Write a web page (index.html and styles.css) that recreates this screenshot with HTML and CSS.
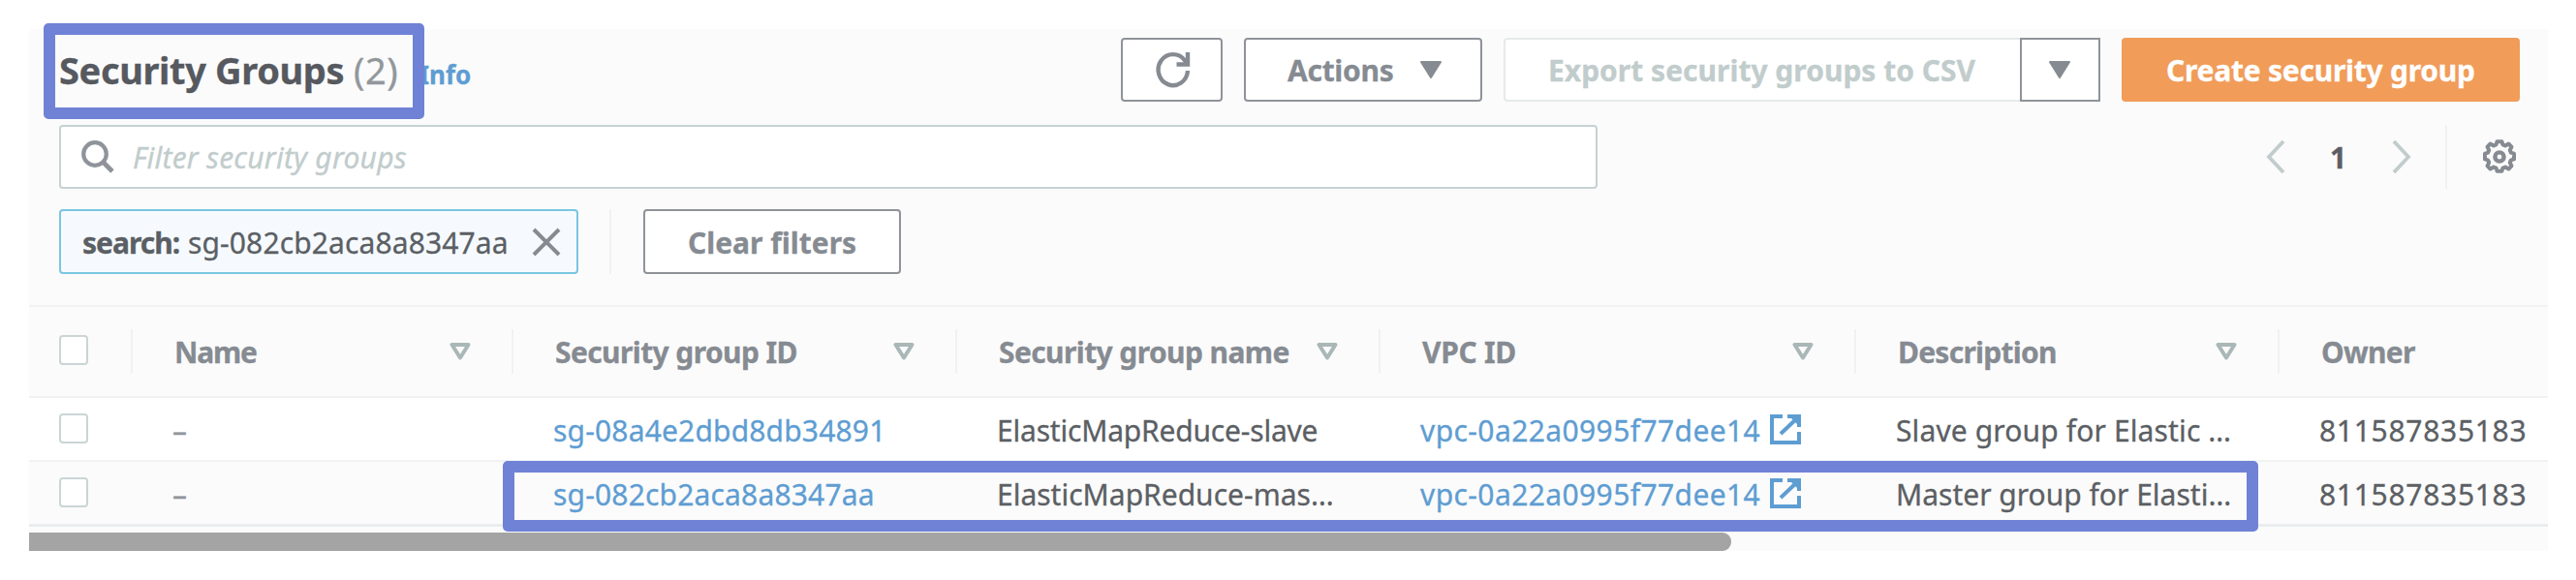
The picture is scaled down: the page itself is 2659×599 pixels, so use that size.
FILE: index.html
```html
<!DOCTYPE html>
<html lang="en">
<head>
<meta charset="utf-8">
<title>Security Groups</title>
<link rel="stylesheet" href="styles.css">
</head>
<body>
<svg class="defs" width="0" height="0">
  <symbol id="ext" viewBox="0 0 32 31"><path d="M13 2H2v27h28V18M18 2h12v11M29 3 11 20" fill="none" stroke="currentColor" stroke-width="4"/><path d="M19 1h12v12z" fill="currentColor"/></symbol>
  <symbol id="sort" viewBox="0 0 22 18"><path d="M2.500 2h17L11 15.500z" fill="none" stroke="currentColor" stroke-width="4" stroke-linejoin="round"/></symbol>
  <symbol id="down" viewBox="0 0 22 18"><path d="M1 1h20L11 17z" fill="currentColor" stroke="currentColor" stroke-width="2" stroke-linejoin="round"/></symbol>
</svg>
<main class="panel">
  <header class="top">
    <h1 class="title">Security Groups</h1><span class="count">(2)</span><a class="info">Info</a>
    <div class="actions">
      <button class="btn refresh"><svg width="36" height="38" viewBox="0 0 36 38"><path d="M33 20A15.200 16 0 1 1 30 9.500L33 13" fill="none" stroke="currentColor" stroke-width="4.400"/><path d="M33 1v12.500H21.500" fill="none" stroke="currentColor" stroke-width="4.400"/></svg></button>
      <button class="btn menu"><span class="t-actions">Actions</span><svg width="22" height="18"><use href="#down"/></svg></button>
      <div class="split">
        <button class="btn export"><span class="t-export">Export security groups to CSV</span></button>
        <button class="btn drop"><svg width="22" height="18"><use href="#down"/></svg></button>
      </div>
      <button class="btn create"><span class="t-create">Create security group</span></button>
    </div>
  </header>
  <section class="search-row">
    <div class="search"><svg width="34" height="34" viewBox="0 0 34 34"><circle cx="14" cy="14" r="11.800" fill="none" stroke="currentColor" stroke-width="4.200"/><path d="m22.500 22.500 9.500 9.500" stroke="currentColor" stroke-width="4.800"/></svg><span class="placeholder">Filter security groups</span></div>
    <nav class="pager">
      <svg class="prev" width="20" height="34" viewBox="0 0 20 34"><path d="M18 1 3 17l15 16" fill="none" stroke="currentColor" stroke-width="3.800"/></svg>
      <span class="page">1</span>
      <svg class="next" width="20" height="34" viewBox="0 0 20 34"><path d="m2 1 15 16L2 33" fill="none" stroke="currentColor" stroke-width="3.800"/></svg>
      <div class="settings"><svg width="36" height="36" viewBox="0 0 36 36"><g fill="none" stroke="currentColor" stroke-linejoin="round"><path stroke-width="4" d="m14.600 5.300.9-3h5l.9 3 2.600 1.100 3.400-1.900 3.100 3.100-1.700 3.500 1.100 2.600 3.100.9v5.800l-3.100.9-1.100 2.600 1.700 3.500-3.100 3.100-3.400-1.900-2.600 1.100-.9 3h-5l-.9-3-2.600-1.100-3.400 1.900-3.100-3.100 1.700-3.500-1.100-2.600-3.100-.9v-5.800l3.100-.9 1.100-2.600-1.700-3.500 3.100-3.100L12 6.400z"/><circle stroke-width="4.400" cx="18" cy="18" r="4.600"/></g></svg></div>
    </nav>
  </section>
  <section class="filters">
    <div class="token"><b class="t-key">search:</b><span class="t-value">sg-082cb2aca8a8347aa</span><svg width="30" height="30" viewBox="0 0 30 30"><path d="m2 2 26 26M28 2 2 28" stroke="currentColor" stroke-width="4"/></svg></div>
    <div class="clear-wrap"><button class="btn clear"><span class="t-clear">Clear filters</span></button></div>
  </section>
  <section class="table">
    <div class="row head">
      <div class="check"><i class="box"></i></div>
      <div class="cell"><span class="h-name">Name</span><svg width="22" height="18"><use href="#sort"/></svg></div>
      <div class="cell"><span class="h-id">Security group ID</span><svg width="22" height="18"><use href="#sort"/></svg></div>
      <div class="cell"><span class="h-gname">Security group name</span><svg width="22" height="18"><use href="#sort"/></svg></div>
      <div class="cell"><span class="h-vpc">VPC ID</span><svg width="22" height="18"><use href="#sort"/></svg></div>
      <div class="cell"><span class="h-desc">Description</span><svg width="22" height="18"><use href="#sort"/></svg></div>
      <div class="cell"><span class="h-owner">Owner</span></div>
    </div>
    <div class="row">
      <div class="check"><i class="box"></i></div>
      <div class="cell muted"><span>–</span></div>
      <div class="cell"><a class="link c-id">sg-08a4e2dbd8db34891</a></div>
      <div class="cell"><span class="c-n1">ElasticMapReduce-slave</span></div>
      <div class="cell"><a class="link c-vpc">vpc-0a22a0995f77dee14</a><svg class="ext" width="32" height="31"><use href="#ext"/></svg></div>
      <div class="cell"><span class="c-d1">Slave group for Elastic …</span></div>
      <div class="cell"><span class="c-owner">811587835183</span></div>
    </div>
    <div class="row alt">
      <div class="check"><i class="box"></i></div>
      <div class="cell muted"><span>–</span></div>
      <div class="cell"><a class="link c-id">sg-082cb2aca8a8347aa</a></div>
      <div class="cell"><span class="c-n2">ElasticMapReduce-mas…</span></div>
      <div class="cell"><a class="link c-vpc">vpc-0a22a0995f77dee14</a><svg class="ext" width="32" height="31"><use href="#ext"/></svg></div>
      <div class="cell"><span class="c-d2">Master group for Elasti…</span></div>
      <div class="cell"><span class="c-owner">811587835183</span></div>
    </div>
  </section>
  <div class="scrollbar"><div class="thumb"></div></div>
</main>
<div class="mark mark-title"></div>
<div class="mark mark-row"></div>
</body>
</html>
```
FILE: styles.css
```css
* { box-sizing: border-box; }
body { margin: 0; padding: 30px 29px 30px 30px; height: 599px; overflow: hidden; background: #fff; position: relative; font: 30px/40px "Noto Sans", sans-serif; color: #5b5f64; }
.defs { position: absolute; }
svg { display: block; flex: none; }
.panel { height: 539px; background: #fbfbfb; overflow: hidden; }
span, a, b, h1 { white-space: nowrap; -webkit-text-stroke: 0.3px currentColor; }

.top { display: flex; align-items: center; height: 66px; margin-top: 9px; padding: 0 29px 0 31px; }
.title { margin: 0; width: 304px; font-size: 38px; line-height: 52px; letter-spacing: -0.36px; color: #56595f; }
.count { width: 68px; font-size: 38px; letter-spacing: 0.6px; color: #92979c; }
.info { margin-top: 9px; font-size: 26px; font-weight: 700; color: #5e9dd2; }
.actions { display: flex; gap: 22px; margin-left: auto; }
.btn { display: flex; align-items: center; height: 66px; padding: 0; border: 2px solid #8f9399; border-radius: 4px; background: #fff; font: 700 30px/40px "Noto Sans", sans-serif; text-align: left; color: #868b92; }
.btn span { padding-top: 2px; }
.refresh { width: 105px; padding-left: 34px; }
.menu { width: 246px; padding-left: 43px; }
.menu span { width: 137px; letter-spacing: -0.3px; }
.split { display: flex; }
.export { width: 533px; padding-left: 44px; border-color: #e6eaea; border-right: 0; border-radius: 4px 0 0 4px; color: #c1cccc; }
.drop { width: 83px; padding-left: 28px; border-radius: 0; }
.create { width: 411px; padding-left: 46px; border: 0; background: #f19c59; color: #fff; }
.t-create { letter-spacing: -0.25px; }

.search-row { display: flex; align-items: center; height: 66px; margin-top: 24px; padding: 0 33px 0 31px; }
.search { display: flex; align-items: center; gap: 19px; width: 1588px; height: 66px; padding-left: 21px; border: 2px solid #c7d2d2; border-radius: 4px; background: #fff; color: #8f949b; }
.placeholder { padding-top: 2px; font-style: italic; letter-spacing: 0.22px; color: #c1cccc; }
.pager { display: flex; align-items: center; margin-left: auto; color: #c1cccc; }
.page { width: 64px; margin-left: 46px; padding-top: 2px; font-weight: 700; color: #5b5f64; }
.settings { display: flex; align-items: center; width: 73px; height: 66px; margin-left: 35px; padding-left: 36px; border-left: 2px solid #f0f2f2; color: #868b92; }

.filters { display: flex; height: 67px; margin-top: 21px; padding-left: 31px; }
.token { display: flex; align-items: center; width: 536px; padding-left: 22px; border: 2px solid #7ac6e0; border-radius: 4px; background: #f6faff; color: #5b5f64; }
.t-key { width: 109px; padding-top: 2px; letter-spacing: -1px; }
.t-value { width: 355px; padding-top: 2px; letter-spacing: 0.12px; }
.token svg { color: #868b92; }
.clear-wrap { margin-left: 32px; padding-left: 33px; border-left: 2px solid #f0f2f2; }
.clear { width: 266px; height: 67px; padding-left: 44px; }

.table { margin-top: 32px; }
.row { display: grid; grid-template-columns: 105px 393px 458px 437px 491px 437px 279px; height: 66px; padding-top: 1px; align-items: center; border-bottom: 2px solid #f1f3f3; background: #fff; }
.head { height: 96px; padding-top: 0; border-top: 2px solid #f1f3f3; background: #fbfbfb; font-weight: 700; color: #868b92; }
.alt { height: 67px; border-bottom: 3px solid #e9eded; background: #fbfbfb; }
.check { padding-left: 31px; }
.box { display: block; width: 30px; height: 31px; margin-top: -3px; border: 2px solid #cbd5d5; border-radius: 4px; background: #fff; }
.head .box { margin-top: -3px; }
.cell { display: flex; align-items: center; padding-left: 43px; min-width: 0; }
.cell span, .cell a { padding-top: 2px; }
.head .cell { height: 46px; padding-left: 43px; border-left: 2px solid #f0f2f2; }
.head .cell svg { margin: 0 42px 0 auto; color: #aab7b7; }
.h-name { letter-spacing: -1.2px; }
.h-id, .h-gname { letter-spacing: -0.6px; }
.h-vpc { letter-spacing: -0.3px; }
.h-desc { letter-spacing: -0.75px; }
.h-owner { letter-spacing: -0.7px; }
.muted { color: #92979c; }
.link { color: #5e9dd2; }
.c-id { letter-spacing: 0.17px; }
.c-n1 { letter-spacing: -0.2px; }
.c-vpc { width: 361px; letter-spacing: 0.4px; }
.c-d1 { letter-spacing: 0.13px; }
.c-owner { letter-spacing: 0.7px; }
.ext { margin-top: 0; color: #5e9dd2; }

.scrollbar { height: 19px; margin-top: 6px; }
.thumb { width: 1757px; height: 19px; border-radius: 0 9px 9px 0; background: #a4a4a4; }

/* Highlight frames laid over the page */
.mark { position: absolute; border: 12px solid #7082d6; border-radius: 5px; }
.mark-title { left: 45px; top: 24px; width: 393px; height: 99px; }
.mark-row { left: 519px; top: 476px; width: 1812px; height: 73px; }
```
